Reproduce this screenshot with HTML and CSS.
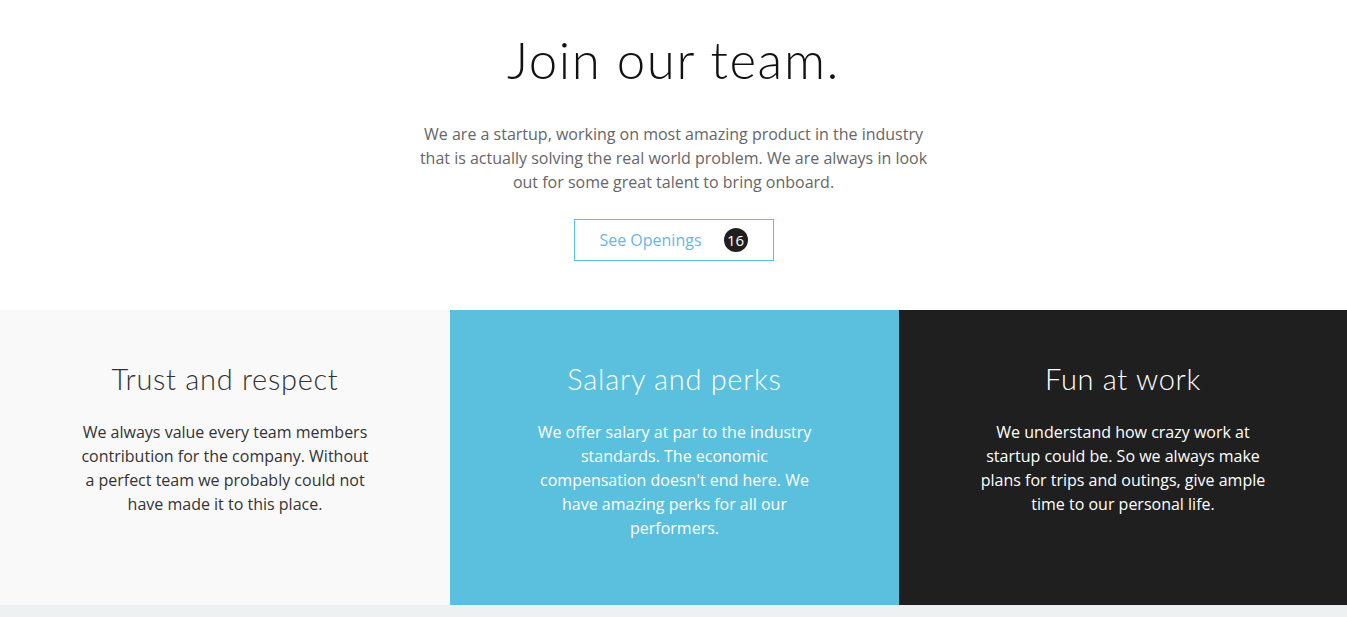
FILE: index.html
```html
<!DOCTYPE html>
<html lang="en">
<head>
<meta charset="utf-8">
<title>Join our team</title>
<link rel="stylesheet" href="styles.css">
</head>
<body>
<section class="intro">
  <h1 class="intro-title">Join our team.</h1>
  <p class="intro-text">We are a startup, working on most amazing product in the industry that is actually solving the real world problem. We are always in look out for some great talent to bring onboard.</p>
  <a class="openings-btn" href="#">See Openings <span class="badge">16</span></a>
</section>
<section class="features">
  <div class="feature feature-light">
    <h2 class="feature-title">Trust and respect</h2>
    <p class="feature-text">We always value every team members contribution for the company. Without a perfect team we probably could not have made it to this place.</p>
  </div>
  <div class="feature feature-blue">
    <h2 class="feature-title">Salary and perks</h2>
    <p class="feature-text">We offer salary at par to the industry standards. The economic compensation doesn't end here. We have amazing perks for all our performers.</p>
  </div>
  <div class="feature feature-dark">
    <h2 class="feature-title">Fun at work</h2>
    <p class="feature-text">We understand how crazy work at startup could be. So we always make plans for trips and outings, give ample time to our personal life.</p>
  </div>
</section>
<div class="footer-strip"></div>
</body>
</html>
```
FILE: styles.css
```css
* { box-sizing: border-box; }
body {
  margin: 0;
  background: #fff;
  font-family: "Open Sans", "Liberation Sans", sans-serif;
  color: #333;
}
.intro {
  display: flex;
  flex-direction: column;
  align-items: center;
  padding: 28px 0 49px;
}
.intro-title {
  margin: 0;
  font-family: Lato, "Noto Sans", sans-serif;
  font-weight: 300;
  font-size: 51px;
  line-height: 64px;
  letter-spacing: 1.6px;
  color: #111;
}
.intro-text {
  margin: 30px 0 0;
  max-width: 520px;
  text-align: center;
  font-size: 16px;
  line-height: 24px;
  font-weight: 400;
  color: #666;
}
.openings-btn {
  margin-top: 25px;
  width: 200px;
  height: 42px;
  display: flex;
  align-items: center;
  justify-content: flex-end;
  gap: 22px;
  padding-right: 25px;
  border: 1px solid #5bc0de;
  text-decoration: none;
  color: #6ab7dc;
  font-size: 16px;
}
.badge {
  width: 24px;
  height: 24px;
  border-radius: 50%;
  background: #1f1f1f;
  color: #fff;
  font-size: 15px;
  display: flex;
  align-items: center;
  justify-content: center;
}
.features {
  display: grid;
  grid-template-columns: 450px 449px 448px;
  height: 295px;
}
.feature {
  display: flex;
  flex-direction: column;
  align-items: center;
  padding-top: 51px;
}
.feature-light { background: #f9f9f9; color: #333; }
.feature-blue { background: #5bc0de; color: #fff; }
.feature-dark { background: #1f1f1f; color: #fff; }
.feature-title {
  margin: 0;
  font-family: Lato, "Noto Sans", sans-serif;
  font-weight: 300;
  font-size: 29px;
  line-height: 36px;
  letter-spacing: 0.7px;
}
.feature-text {
  margin: 23px 0 0;
  max-width: 290px;
  text-align: center;
  font-size: 16px;
  line-height: 24px;
}
.footer-strip {
  height: 12px;
  background: #edf1f2;
}
```
